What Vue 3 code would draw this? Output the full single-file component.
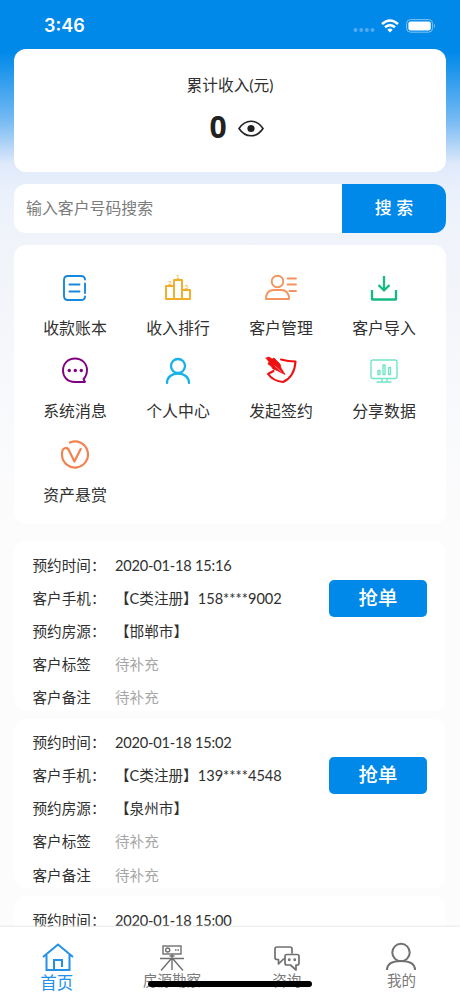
<script setup>
const tools = [
  { id: 'book', label: '收款账本' },
  { id: 'rank', label: '收入排行' },
  { id: 'manage', label: '客户管理' },
  { id: 'import', label: '客户导入' },
  { id: 'message', label: '系统消息' },
  { id: 'person', label: '个人中心' },
  { id: 'sign', label: '发起签约' },
  { id: 'share', label: '分享数据' },
  { id: 'reward', label: '资产悬赏' },
]
const orders = [
  { time: '2020-01-18 15:16', phone: '【C类注册】158****9002', house: '【邯郸市】' },
  { time: '2020-01-18 15:02', phone: '【C类注册】139****4548', house: '【泉州市】' },
  { time: '2020-01-18 15:00' },
]
</script>

<template>
  <div class="screen">
    <header class="status">
      <span class="clock">3:46</span>
      <svg class="signal" width="22" height="6" viewBox="0 0 22 6"><g fill="#4fabf0"><circle cx="2.5" cy="3" r="2" /><circle cx="8.2" cy="3" r="2" /><circle cx="13.9" cy="3" r="2" /><circle cx="19.5" cy="3" r="2" /></g></svg>
      <svg class="wifi" width="18" height="14" viewBox="0 0 18 14" fill="none" stroke="#fff" stroke-width="2.5"><path d="M1 5Q9-2 17 5" /><path d="M4 8.3Q9 4 14 8.3" /><path d="M6.3 10.7Q9 8.5 11.7 10.7L9 13.5Z" fill="#fff" stroke="none" /></svg>
      <svg class="battery" width="30" height="14" viewBox="0 0 30 14"><rect x=".6" y=".6" width="26" height="12.6" rx="4" fill="none" stroke="#80c4f5" /><rect x="2.4" y="2.4" width="22.4" height="9" rx="2.2" fill="#fff" /><path d="M28 4.5q2 2.4 0 4.8z" fill="#80c4f5" /></svg>
    </header>

    <main class="content">
      <section class="income">
        <div class="income-title">累计收入(元)</div>
        <div class="income-value">
          <b>0</b>
          <svg width="26" height="17" viewBox="0 0 26 17" fill="none" stroke="#222" stroke-width="1.6"><path d="M1 8.5C4 4 8.2 1.2 13 1.2S22 4 25 8.5C22 13 17.8 15.8 13 15.8S4 13 1 8.5Z" /><circle cx="13" cy="8.5" r="3.6" fill="#222" stroke="none" /></svg>
        </div>
      </section>

      <section class="search">
        <div class="field">输入客户号码搜索</div>
        <div class="search-button">搜 索</div>
      </section>

      <section class="tools">
        <div v-for="t in tools" :key="t.id" class="tool">
          <svg class="tool-icon" width="34" height="30" viewBox="0 0 34 30" fill="none" stroke-width="1.9" stroke-linecap="round" stroke-linejoin="round">
            <g v-if="t.id === 'book'" stroke="#1788dc"><path d="M27 6.5Q27 3 23 3H10Q6 3 6 7V23Q6 27 10 27H23Q27 27 27 23.5M27 10.5V20M11.500 11.5H21.5M11.500 18.5H21.5" /></g>
            <g v-else-if="t.id === 'rank'" stroke="#f2ac26"><path d="M5 13H13V26H5ZM13 7H21V26H13ZM21 17H29V26H21Z" /><g class="rank-number" fill="#f2ac26" stroke="none" text-anchor="middle"><text x="9" y="11.5">2</text><text x="17" y="5.5">1</text><text x="25.5" y="15.5">3</text></g></g>
            <g v-else-if="t.id === 'manage'" stroke="#f2945f"><circle cx="13.5" cy="8.5" r="5.8" /><path d="M2 26Q2 17 10 17H17Q25 17 25 26ZM23.500 5.5H32M23.500 11.5H32M25.500 18H32" /></g>
            <g v-else-if="t.id === 'import'" stroke="#14bb80" stroke-width="2.3"><path d="M17 3V17M11.500 12L17 17.5L22.500 12M5 17V26.5H29V17" stroke-linecap="butt" /></g>
            <g v-else-if="t.id === 'message'" stroke="#800080"><path d="M27 26H17C9 26 5 20.5 5 14.5C5 7.5 10 2.5 17 2.5S29 7.5 29 14C29 17.5 28 20.5 25.500 23Z" /><g fill="#800080" stroke="none"><circle cx="11.3" cy="14.5" r="1.7" /><circle cx="17.3" cy="14.5" r="1.7" /><circle cx="23.3" cy="14.5" r="1.7" /></g></g>
            <g v-else-if="t.id === 'person'" stroke="#18b2e8" stroke-width="2.3"><circle cx="17" cy="10" r="7" /><path d="M6 27C6 21 11 17.500 17 17.500S28 21 28 27" /></g>
            <g v-else-if="t.id === 'sign'" stroke="#ef1111" stroke-width="2.1"><path d="M17 3.500Q24 5.500 31.500 5.500C31 14 28 22 19 26Q9 25 4 18L9.500 15" /><path d="M2 2L5 1L8 3L10 2L13 5L16 8L17 12L21 18.5L18 17L12 14L9 13L7 10L4 8L5 6Z" fill="#ef1111" stroke-width=".8" /><path d="M11 10L17 15.5" stroke="#fff" stroke-width=".5" /></g>
            <g v-else-if="t.id === 'share'" stroke="#72e4c8" stroke-width="1.4"><rect x="4" y="4" width="26" height="18.5" rx="2" /><path d="M11 14.500H13V18.500H11ZM16 9H18V18.500H16ZM21.500 11.500H23.500V18.500H21.500ZM15 23V25.500M20 23V25.500M10 26H24" /></g>
            <g v-else stroke="#f28350" stroke-width="2.2"><path d="M12 2.500A13 13 0 1 1 4 15C3.500 7 9.500 6 11.500 11.500L16.400 21.500L22.700 9" /></g>
          </svg>
          <span>{{ t.label }}</span>
        </div>
      </section>

      <section class="orders">
        <article v-for="o in orders" :key="o.time" class="order">
          <dl>
            <dt>预约时间：</dt><dd class="time">{{ o.time }}</dd>
            <template v-if="o.phone">
              <dt>客户手机：</dt><dd>{{ o.phone }}</dd>
              <dt>预约房源：</dt><dd>{{ o.house }}</dd>
              <dt>客户标签</dt><dd class="muted">待补充</dd>
              <dt>客户备注</dt><dd class="muted">待补充</dd>
            </template>
          </dl>
          <div v-if="o.phone" class="grab">抢单</div>
        </article>
      </section>
    </main>

    <nav class="tabs">
      <div class="tab active">
        <svg width="34" height="30" viewBox="0 0 34 30" fill="none" stroke="#2491e8" stroke-width="2"><path d="M2 15L17 2.500L32 15M5.500 13V28H28.500V13M13 28V18H21V25" /></svg>
        <span>首页</span>
      </div>
      <div class="tab">
        <svg width="34" height="30" viewBox="0 0 34 30" fill="none" stroke="#707070" stroke-width="1.4"><rect x="8" y="4" width="18" height="8" /><circle cx="12.7" cy="8" r="2" /><path d="M20 8H21.500M22.500 8H24M17 12V28M5 16.500H29M16 17L6 28.500M18 17L28 28.500M14.500 14H19.500" /></svg>
        <span>房源勘察</span>
      </div>
      <div class="tab">
        <svg width="34" height="30" viewBox="0 0 34 30" fill="none" stroke="#707070" stroke-width="1.7" stroke-linejoin="round"><path d="M14 16.500L8.500 22V17.500H7Q5 17.500 5 15.500V7Q5 5 7 5H20Q22 5 22 7V11.500M17 12.500H27Q29 12.500 29 14.500V21Q29 23 27 23H26V28L20.500 23H17Q15 23 15 21V14.500Q15 12.500 17 12.500Z" /><circle cx="19.3" cy="17.8" r=".6" /><circle cx="24.7" cy="17.8" r=".6" /></svg>
        <span>咨询</span>
      </div>
      <div class="tab">
        <svg width="34" height="30" viewBox="0 0 34 30" fill="none" stroke="#707070" stroke-width="2"><circle cx="17" cy="10.5" r="8.7" /><path d="M3 28C3 22 8 19 17 19S31 22 31 28" /></svg>
        <span>我的</span>
      </div>
      <i class="home-bar"></i>
    </nav>
  </div>
</template>

<style>
body { margin: 0; overflow: hidden; }
</style>
<style scoped>
* { box-sizing: border-box; }
.screen {
  position: relative;
  height: 996px;
  overflow: hidden;
  color: #303030;
  font-family: Lato, "Noto Sans CJK SC", sans-serif;
  font-weight: 400;
  background: linear-gradient(#0089e9 0, #0089e9 52px, #75baf3 120px, #dfe9fa 164px, #eaf1fc 190px, #f0f3f9 240px, #f8f9fc 400px, #fcfcfc 530px);
}
.status { height: 49px; padding: 2px 24px 0 44px; display: flex; align-items: center; color: #fff; }
.clock { flex: 1; font: 600 18px/24px Inter, sans-serif; }
.signal { margin: 9px 6px 0 0; }
.wifi { margin-right: 7px; }
.content { padding: 0 14px; }
.income { height: 123px; border-radius: 12px; background: #fff; text-align: center; }
.income-title { padding-top: 25px; font-size: 15.7px; line-height: 23px; }
.income-value { margin-top: 13px; padding-left: 13px; height: 34px; display: flex; justify-content: center; align-items: center; gap: 11px; }
.income-value b { color: #222; font: 700 30px/34px "Noto Sans", sans-serif; }
.income-value svg { margin-top: 2px; }
.search { margin-top: 12px; height: 49px; border-radius: 12px; overflow: hidden; display: flex; background: #fff; font-size: 15.9px; line-height: 48px; }
.field { flex: 1; padding-left: 12px; color: #7c7c7c; }
.search-button { width: 104px; background: #0089e9; color: #fff; text-align: center; font-size: 17px; font-weight: 500; }
.tools { margin-top: 12px; height: 279px; padding: 28px 10.5px 0 9.5px; border-radius: 12px; background: #fff; display: grid; grid-template-columns: repeat(4, 103px); grid-auto-rows: 83.3px; }
.tool { display: flex; flex-direction: column; align-items: center; font-size: 15.9px; line-height: 24px; }
.tool-icon { margin-bottom: 13px; }
.rank-number { font-size: 6.5px; }
.orders { margin-top: 17px; display: grid; gap: 8px; }
.order { height: 169.7px; padding: 7.5px 19px 0 18.5px; border-radius: 12px; background: #fff; display: flex; justify-content: space-between; }
dl { margin: 0; display: grid; grid-template-columns: 82.5px auto; grid-auto-rows: 33.1px; font-size: 14.6px; line-height: 33px; white-space: nowrap; }
dd { margin: 0; }
.time { letter-spacing: -0.2px; }
.muted { color: #a6a6a6; }
.grab { width: 98px; height: 37px; margin-top: 31px; border-radius: 5px; background: #0089e9; color: #fff; font-size: 19.5px; line-height: 35px; font-weight: 500; text-align: center; }
.tabs { position: absolute; left: 0; right: 0; bottom: 0; height: 69px; padding-top: 15px; background: #fff; box-shadow: 0 -1px 2px #e9e9e9; display: grid; grid-template-columns: repeat(4, 114.7px); }
.tab { display: flex; flex-direction: column; align-items: center; color: #7a7a7a; font-size: 14.5px; line-height: 18px; }
.tab.active { margin-left: 2px; color: #2491e8; font-size: 16.5px; line-height: 22px; }
.tab.active span { margin-right: 3px; }
.home-bar { position: absolute; left: 148px; top: 54px; width: 164px; height: 6px; border-radius: 3px; background: #000; }
</style>
